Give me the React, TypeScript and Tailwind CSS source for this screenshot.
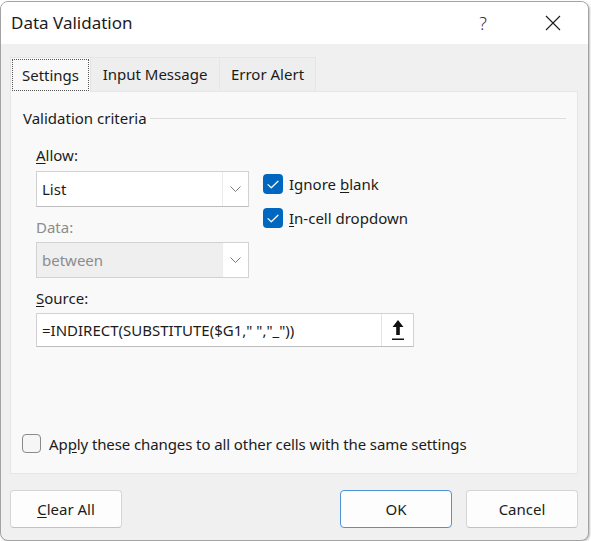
import React from 'react';

const Chevron = () => (
  <svg width="11" height="6" viewBox="0 0 11 6" fill="none">
    <path d="M0.5 0.5l5 5 5-5" stroke="#7a7a7a" strokeWidth="1" />
  </svg>
);

function CheckBox({ checked }: { checked: boolean }) {
  if (!checked) {
    return <div className="w-[19px] h-[19px] rounded-[4px] border border-[#8a8a8a] bg-[#f6f6f6]" />;
  }
  return (
    <div className="w-[20px] h-[20px] rounded-[4px] bg-[#0067c0] flex items-center justify-center">
      <svg width="12" height="9" viewBox="0 0 12 9" fill="none">
        <path d="M1 4.6l3.3 3.2L11 1.2" stroke="#ffffff" strokeWidth="1.2" strokeLinecap="round" strokeLinejoin="round" />
      </svg>
    </div>
  );
}

function Combo({ value, disabled }: { value: string; disabled?: boolean }) {
  return (
    <div
      className={`flex h-[36px] w-[213px] border border-[#d2d2d2] ${
        disabled ? 'bg-[#efefef] text-[#8c8c8c]' : 'bg-white text-[#1b1b1b] border-b-[#bdbdbd]'
      }`}
    >
      <div className="flex-1 flex items-center pl-[5px] text-[15px]">{value}</div>
      <div className="w-[26px] flex items-center justify-center bg-white border-l border-[#ececec]">
        <Chevron />
      </div>
    </div>
  );
}

function Button({ children, primary }: { children: React.ReactNode; primary?: boolean }) {
  return (
    <div
      className={`w-[112px] h-[38px] rounded-[4px] flex items-center justify-center text-[15px] bg-[#fdfdfd] border ${
        primary ? 'border-[#4d94d8]' : 'border-[#d6d6d6] border-b-[#c2c2c2]'
      }`}
    >
      {children}
    </div>
  );
}

export default function App() {
  return (
    <div className="w-[591px] h-[541px] bg-white pt-px font-['Noto_Sans','DejaVu_Sans',sans-serif] text-[#1b1b1b]">
      <div className="w-[589px] h-[540px] rounded-lg border border-[#a3a3a3] bg-[#f0f0f0] overflow-hidden flex flex-col shadow-[1px_1px_2px_rgba(0,0,0,0.25)]">
        {/* Title bar */}
        <div className="h-[42px] bg-white flex items-center pl-[10px] shrink-0">
          <div className="text-[17px] flex-1">Data Validation</div>
          <div className="w-[30px] text-center text-[18px] font-light text-[#333] mr-[47px]">?</div>
          <div className="w-[16px] h-[16px] mr-[27px]">
            <svg width="16" height="16" viewBox="0 0 16 16" fill="none">
              <path d="M1 1l14 14M15 1L1 15" stroke="#1b1b1b" strokeWidth="1.1" />
            </svg>
          </div>
        </div>

        <div className="flex-1 flex flex-col pl-[9px] pr-[10px] pt-[13px]">
          {/* Tabs */}
          <div className="flex h-[34px] text-[15px] shrink-0">
            <div className="w-[81px] bg-[#f9f9f9] border border-b-0 border-[#e3e3e3] p-[1px] relative z-10 h-[35px]">
              <div className="h-[32px] border border-dotted border-[#555] flex items-center justify-center">
                Settings
              </div>
            </div>
            <div className="w-[129px] bg-[#eeeeee] border-t border-r border-[#e6e6e6] flex items-center justify-center">
              Input Message
            </div>
            <div className="w-[96px] bg-[#eeeeee] border-t border-r border-[#e6e6e6] flex items-center justify-center">
              Error Alert
            </div>
          </div>

          {/* Panel */}
          <div className="h-[383px] bg-[#f9f9f9] border border-[#e6e6e6] shrink-0 flex flex-col">
            <div className="flex items-center pl-[12px] pr-[11px] pt-[16px] h-[36px] text-[15px]">
              <span>Validation criteria</span>
              <div className="flex-1 h-px bg-[#dedede] ml-[3px]" />
            </div>

            <div className="pl-[25px] pt-[17px]">
              <div className="flex">
                <div className="w-[213px]">
                  <div className="h-[20px] leading-[20px] text-[15px]">
                    <span className="underline underline-offset-2">A</span>llow:
                  </div>
                  <div className="mt-[6px]">
                    <Combo value="List" />
                  </div>
                  <div className="h-[20px] leading-[20px] text-[15px] mt-[10px] text-[#8c8c8c]">Data:</div>
                  <div className="mt-[5px]">
                    <Combo value="between" disabled />
                  </div>
                </div>
                <div className="ml-[14px] pt-[29px] flex flex-col gap-[14px] text-[15px]">
                  <div className="flex items-center gap-[6px] h-[20px]">
                    <CheckBox checked />
                    <span>
                      Ignore <span className="underline underline-offset-2">b</span>lank
                    </span>
                  </div>
                  <div className="flex items-center gap-[6px] h-[20px]">
                    <CheckBox checked />
                    <span>
                      <span className="underline underline-offset-2">I</span>n-cell dropdown
                    </span>
                  </div>
                </div>
              </div>

              <div className="h-[20px] leading-[20px] text-[15px] mt-[10px]">
                <span className="underline underline-offset-2">S</span>ource:
              </div>
              <div className="mt-[5px] w-[378px] h-[34px] bg-white border border-[#d2d2d2] border-b-[#bdbdbd] flex">
                <div className="flex-1 flex items-center pl-[5px] text-[15px] whitespace-nowrap">
                  =INDIRECT(SUBSTITUTE($G1," ","_"))
                </div>
                <div className="w-[32px] bg-white border-l border-[#e4e4e4] flex items-center justify-center">
                  <svg width="14" height="22" viewBox="0 0 14 22" fill="none">
                    <path d="M7 1L1.5 8h3.7v8h3.6V8h3.7z" fill="#111" />
                    <rect x="1" y="19.5" width="12" height="1.5" fill="#111" />
                  </svg>
                </div>
              </div>
            </div>

            <div className="flex-1" />
            <div className="flex items-center gap-[8px] pl-[11px] mb-[18px] text-[15px] tracking-[-0.1px]">
              <CheckBox checked={false} />
              <span>
                Ap<span className="underline underline-offset-2">p</span>ly these changes to all other cells with the
                same settings
              </span>
            </div>
          </div>

          {/* Buttons */}
          <div className="flex items-center mt-[16px]">
            <Button>
              <span>
                <span className="underline underline-offset-2">C</span>lear All
              </span>
            </Button>
            <div className="flex-1" />
            <Button primary>OK</Button>
            <div className="w-[14px]" />
            <Button>Cancel</Button>
          </div>
        </div>
      </div>
    </div>
  );
}
